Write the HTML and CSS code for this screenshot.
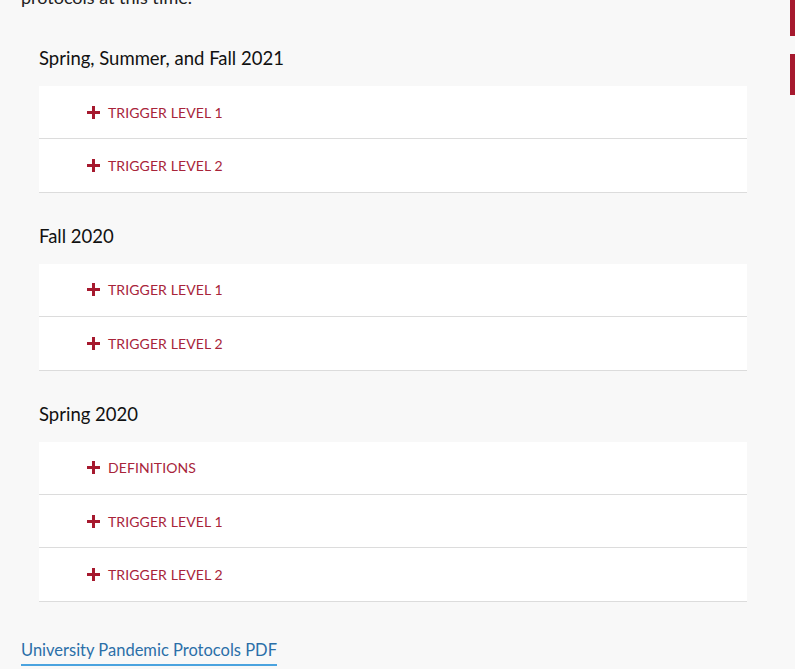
FILE: index.html
```html
<!DOCTYPE html>
<html>
<head>
    <link rel="stylesheet" href="styles.css">
</head>
<body>
    <div id="page">
        <p class="intro">protocols at this time.</p>

        <div class="term">
            <h3>Spring, Summer, and Fall 2021</h3>
            <div class="accordion">
                <div class="item"><span class="plus"></span>Trigger Level 1</div>
                <div class="item"><span class="plus"></span>Trigger Level 2</div>
            </div>
        </div>

        <div class="term">
            <h3>Fall 2020</h3>
            <div class="accordion">
                <div class="item"><span class="plus"></span>Trigger Level 1</div>
                <div class="item"><span class="plus"></span>Trigger Level 2</div>
            </div>
        </div>

        <div class="term">
            <h3>Spring 2020</h3>
            <div class="accordion">
                <div class="item"><span class="plus"></span>Definitions</div>
                <div class="item"><span class="plus"></span>Trigger Level 1</div>
                <div class="item"><span class="plus"></span>Trigger Level 2</div>
            </div>
        </div>

        <a class="pdf-link" href="#">University Pandemic Protocols PDF</a>
    </div>

    <div class="side-tabs">
        <div class="tab tab-1"></div>
        <div class="tab tab-2"></div>
    </div>
</body>
</html>
```

FILE: styles.css
```css
body {
    margin: 0;
    background: #f8f8f8;
    font-family: Lato, "Open Sans", sans-serif;
    color: #111;
    overflow: hidden;
}

#page {
    padding: 0 48px 0 21px;
}

.intro {
    margin: -16px 0 0;
    font-size: 18px;
    line-height: 27px;
    color: #222;
}

.term {
    padding-left: 18px;
}

.term h3 {
    margin: 33px 0 14px;
    font-size: 18.5px;
    font-weight: 400;
    line-height: 28px;
}

.term + .term h3 {
    margin-top: 29px;
}

.accordion {
    background: #fff;
    width: 708px;
}

.item {
    display: flex;
    align-items: center;
    height: 53.4px;
    padding-left: 48px;
    border-bottom: 1px solid #dcdcdc;
    font-size: 14px;
    letter-spacing: 0.1px;
    text-transform: uppercase;
    color: #a8243a;
    box-sizing: border-box;
}

.plus {
    position: relative;
    width: 13px;
    height: 13px;
    margin-right: 8px;
}

.plus::before,
.plus::after {
    content: "";
    position: absolute;
    background: #a6192e;
}

.plus::before {
    left: 0;
    right: 0;
    top: 5px;
    height: 3px;
}

.plus::after {
    top: 0;
    bottom: 0;
    left: 5px;
    width: 3px;
}

.pdf-link {
    display: inline-block;
    margin-top: 36px;
    padding-bottom: 2px;
    font-size: 16.5px;
    line-height: 24px;
    color: #2b6fa8;
    text-decoration: none;
    border-bottom: 2px solid #4aa3df;
}

.side-tabs {
    position: fixed;
    top: 0;
    right: 0;
    width: 5px;
}

.tab {
    background: #a6192e;
}

.tab-1 {
    height: 36px;
}

.tab-2 {
    height: 41px;
    margin-top: 18px;
}
```
